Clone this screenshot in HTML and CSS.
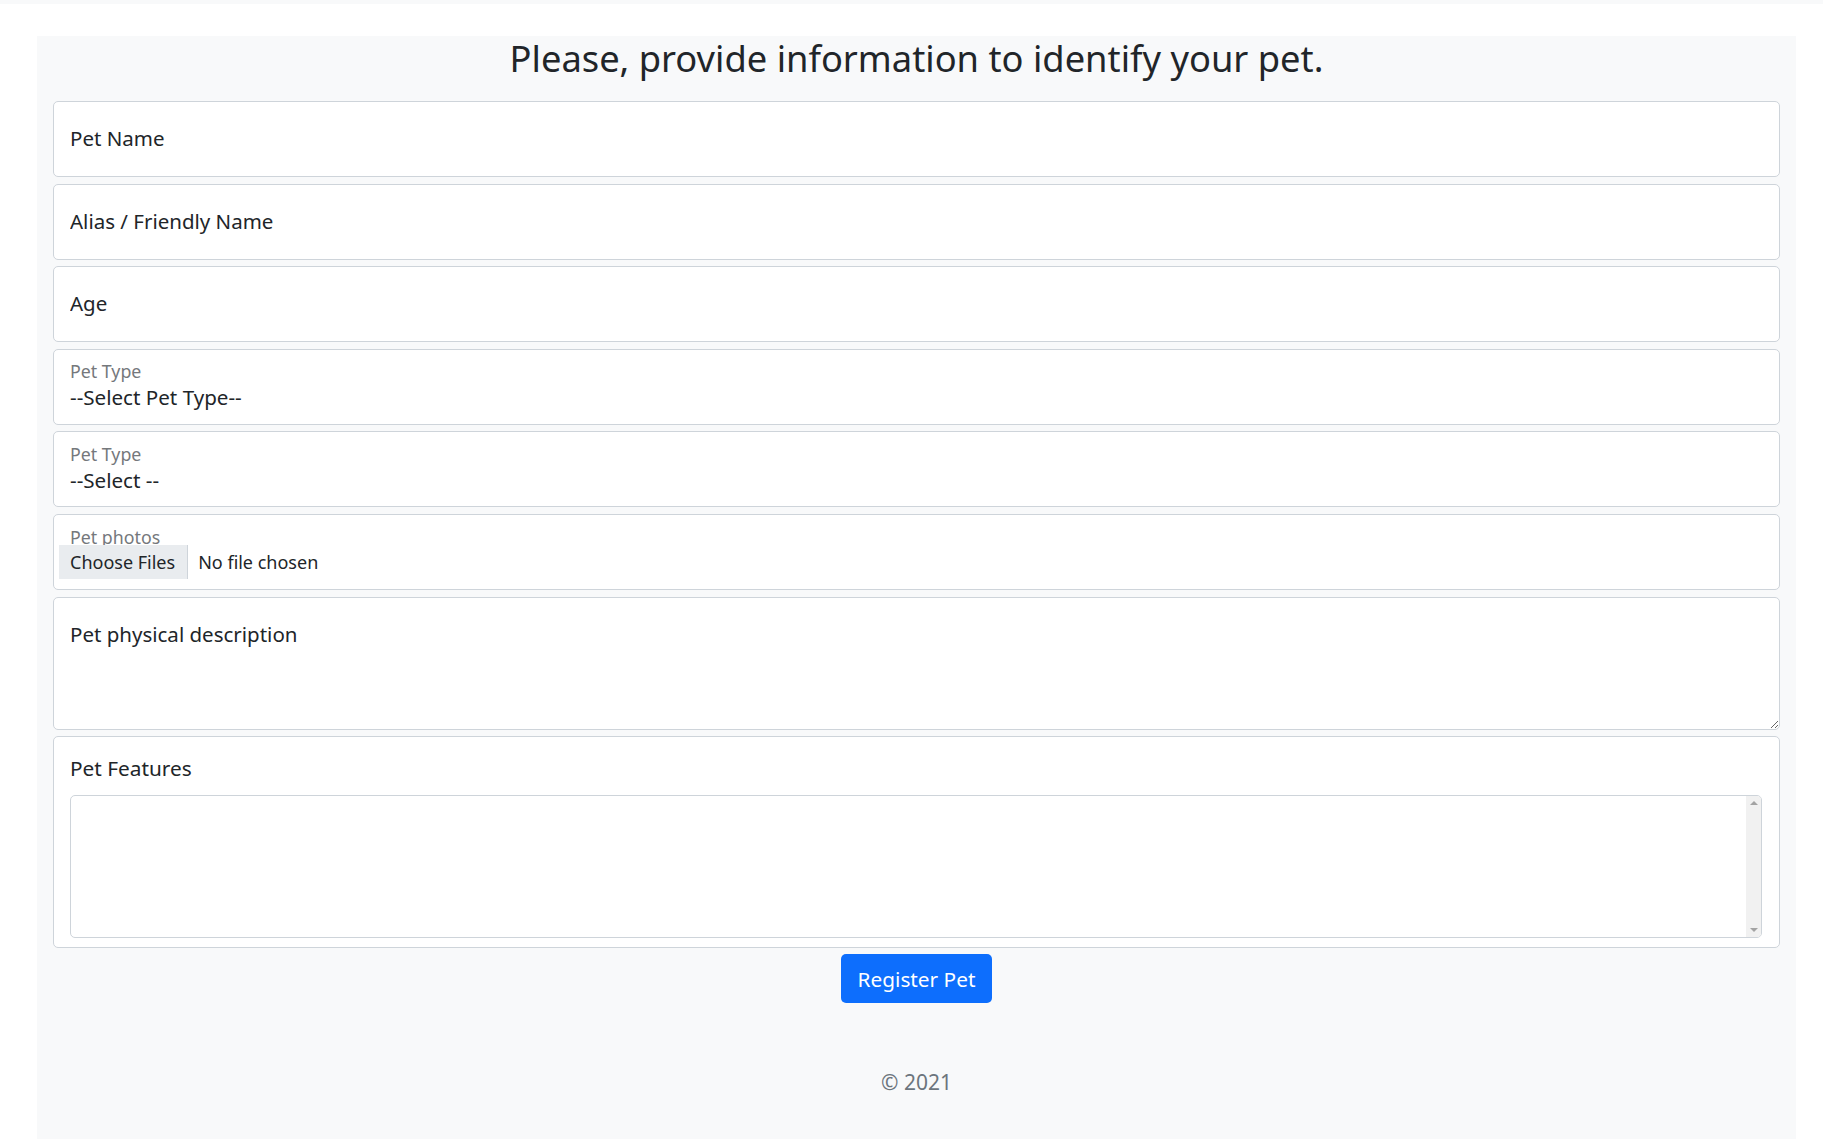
FILE: index.html
```html
<!DOCTYPE html>
<html lang="en">
<head>
<meta charset="utf-8">
<title>Register Pet</title>
<link rel="stylesheet" href="styles.css">
</head>
<body>
<div class="topbar"></div>
<main class="page">
  <h2 class="title">Please, provide information to identify your pet.</h2>
  <form class="pet-form">
    <div class="fields">
      <input class="field text-field" type="text" placeholder="Pet Name">
      <input class="field text-field" type="text" placeholder="Alias / Friendly Name">
      <input class="field text-field" type="text" placeholder="Age">
      <div class="field stacked">
        <span class="small-label">Pet Type</span>
        <select class="plain-select"><option>--Select Pet Type--</option></select>
      </div>
      <div class="field stacked">
        <span class="small-label">Pet Type</span>
        <select class="plain-select"><option>--Select --</option></select>
      </div>
      <div class="field stacked">
        <span class="small-label file-label">Pet photos</span>
        <div class="file-row">
          <span class="file-btn">Choose Files</span>
          <span class="file-name">No file chosen</span>
        </div>
      </div>
      <textarea class="field area-field" placeholder="Pet physical description"></textarea>
      <div class="field features">
        <span class="features-label">Pet Features</span>
        <div class="listbox">
          <div class="list-body"></div>
          <div class="scrollbar">
            <span class="arrow up"></span>
            <span class="arrow down"></span>
          </div>
        </div>
      </div>
    </div>
    <div class="actions">
      <button type="button" class="btn-primary">Register Pet</button>
    </div>
  </form>
  <footer class="footer">© 2021</footer>
</main>
</body>
</html>
```

FILE: styles.css
```css
* { box-sizing: border-box; }

body {
  margin: 0;
  background: #ffffff;
  font-family: "Noto Sans", "Open Sans", sans-serif;
  color: #212529;
}

.topbar {
  height: 4px;
  background: #f8f9fa;
}

.page {
  margin: 32px 0 0 37px;
  width: 1759px;
  background: #f8f9fa;
  padding: 0 16px 60px;
}

.title {
  margin: 0 0 21px;
  font-size: 36.3px;
  line-height: 44px;
  font-weight: 400;
  text-align: center;
  color: #212529;
}

.fields {
  display: flex;
  flex-direction: column;
  gap: 6.6px;
}

.field {
  display: block;
  width: 100%;
  background: #ffffff;
  border: 1px solid #ced4da;
  border-radius: 5px;
  font-family: inherit;
  color: #212529;
}

.text-field {
  height: 76px;
  padding: 0 16px 2px;
  font-size: 20.5px;
  outline: none;
}

.text-field::placeholder,
.area-field::placeholder {
  color: #212529;
  opacity: 1;
}

.stacked {
  height: 76px;
  padding: 11.6px 16px 0;
  display: flex;
  flex-direction: column;
  align-items: flex-start;
}

.small-label {
  font-size: 17.8px;
  line-height: 21px;
  color: #75787c;
}

.plain-select {
  appearance: none;
  -webkit-appearance: none;
  border: 0;
  background: transparent;
  padding: 0;
  margin: 0;
  font-family: inherit;
  font-size: 20.6px;
  line-height: 30.75px;
  height: 30.75px;
  color: #212529;
  outline: none;
}

.file-label {
  margin-bottom: -3px;
}

.file-row {
  display: flex;
  align-items: center;
  margin-left: -11px;
  font-size: 18px;
}

.file-btn {
  display: flex;
  align-items: center;
  height: 34px;
  padding: 0 12px 0 11px;
  background: #e9ecef;
  border-right: 1px solid #ced4da;
  color: #212529;
}

.file-name {
  margin-left: 10px;
  color: #212529;
}

.area-field {
  height: 133px;
  padding: 21px 16px 8px;
  font-size: 20.5px;
  line-height: 30.75px;
  resize: vertical;
  outline: none;
}

.features {
  padding: 16px 17px 9px 16px;
}

.features-label {
  display: block;
  font-size: 20.8px;
  line-height: 30.75px;
  margin-bottom: 11px;
}

.listbox {
  display: flex;
  height: 143px;
  border: 1px solid #ced4da;
  border-radius: 5px;
  overflow: hidden;
  background: #ffffff;
}

.list-body {
  flex: 1;
}

.scrollbar {
  width: 15px;
  background: #f1f1f1;
  display: flex;
  flex-direction: column;
  justify-content: space-between;
  align-items: center;
  padding: 5px 0;
}

.arrow {
  width: 0;
  height: 0;
  border-left: 4px solid transparent;
  border-right: 4px solid transparent;
}

.arrow.up { border-bottom: 4px solid #a3a3a3; }
.arrow.down { border-top: 4px solid #a3a3a3; }

.actions {
  display: flex;
  justify-content: center;
  margin-top: 6px;
}

.btn-primary {
  height: 49.5px;
  padding: 0 17px;
  border: 0;
  border-radius: 5px;
  background: #0d6efd;
  color: #ffffff;
  font-family: inherit;
  font-size: 20.8px;
}

.footer {
  margin-top: 65px;
  text-align: center;
  font-size: 21px;
  line-height: 29px;
  color: #6c757d;
}
```
